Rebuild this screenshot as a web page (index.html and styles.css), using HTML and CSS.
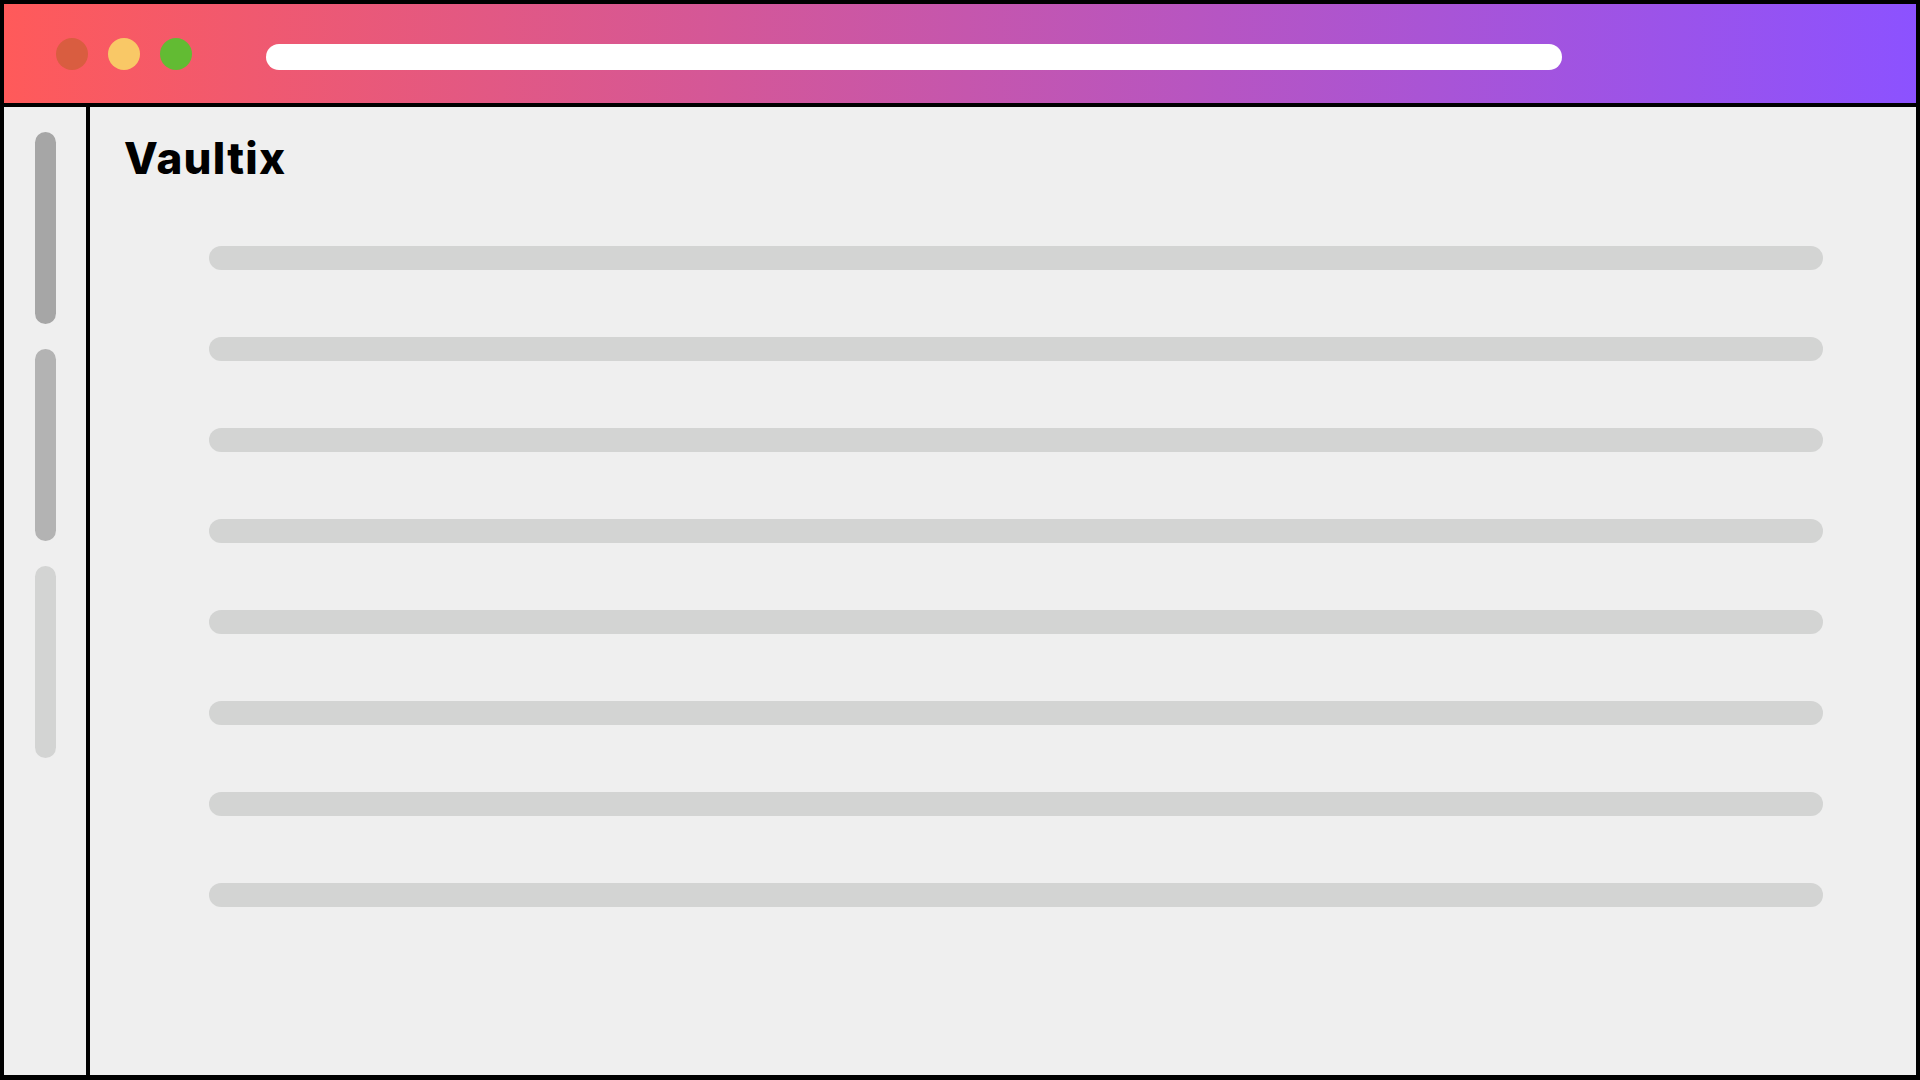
FILE: index.html
```html
<!DOCTYPE html>
<html lang="en">
<head>
<meta charset="utf-8">
<title>Vaultix</title>
<link rel="stylesheet" href="styles.css">
</head>
<body>
<div class="window">
  <header class="titlebar">
    <div class="lights">
      <span class="light light-red"></span>
      <span class="light light-yellow"></span>
      <span class="light light-green"></span>
    </div>
    <div class="urlbar"></div>
  </header>
  <div class="body">
    <aside class="sidebar">
      <span class="pill pill-dark"></span>
      <span class="pill pill-mid"></span>
      <span class="pill pill-light"></span>
    </aside>
    <main class="content">
      <h1 class="brand">Vaultix</h1>
      <div class="lines">
        <span class="line"></span>
        <span class="line"></span>
        <span class="line"></span>
        <span class="line"></span>
        <span class="line"></span>
        <span class="line"></span>
        <span class="line"></span>
        <span class="line"></span>
      </div>
    </main>
  </div>
</div>
</body>
</html>
```
FILE: styles.css
```css
* { box-sizing: border-box; }
html, body { margin: 0; padding: 0; }
body {
  width: 1920px;
  height: 1080px;
  overflow: hidden;
  background: #000;
  font-family: Inter, "Noto Sans", sans-serif;
}
.window {
  width: 1920px;
  height: 1080px;
  border: 4px solid #000;
  border-bottom-width: 5px;
  display: flex;
  flex-direction: column;
  background: #efefef;
}
.titlebar {
  height: 103px;
  flex: none;
  border-bottom: 4px solid #000;
  background: linear-gradient(90deg, #ff5a5a 0%, #8c52ff 100%);
  display: flex;
  align-items: flex-start;
  padding: 34px 0 0 52px;
}
.lights {
  display: flex;
  gap: 20px;
}
.light {
  width: 32px;
  height: 32px;
  border-radius: 50%;
  display: block;
}
.light-red { background: #d95d40; }
.light-yellow { background: #f9c866; }
.light-green { background: #62bb33; }
.urlbar {
  margin-left: 74px;
  margin-top: 6px;
  width: 1296px;
  height: 26px;
  border-radius: 13px;
  background: #fff;
}
.body {
  flex: 1;
  display: flex;
  min-height: 0;
}
.sidebar {
  width: 86px;
  flex: none;
  border-right: 4px solid #000;
  display: flex;
  flex-direction: column;
  align-items: center;
  gap: 25px;
  padding-top: 25px;
}
.pill {
  display: block;
  width: 21px;
  height: 192px;
  border-radius: 11px;
}
.pill-dark { background: #a6a6a6; }
.pill-mid { background: #b3b3b3; }
.pill-light { background: #d3d4d3; }
.content {
  flex: 1;
  padding: 29px 93px 0 34px;
}
.brand {
  margin: 0;
  font-size: 44px;
  line-height: 44px;
  font-weight: 800;
  color: #000;
  letter-spacing: 1.3px;
}
.lines {
  margin: 66px 0 0 85px;
  display: flex;
  flex-direction: column;
  gap: 67px;
}
.line {
  display: block;
  height: 24px;
  border-radius: 12px;
  background: #d3d4d3;
}
```
